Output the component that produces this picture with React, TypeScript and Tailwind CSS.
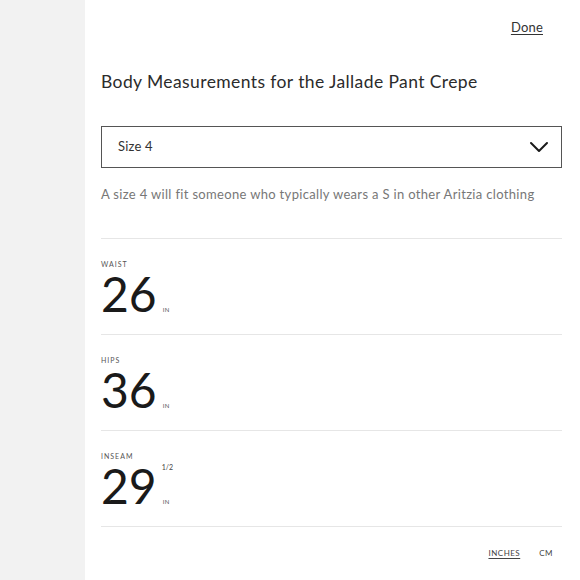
import React, { useState } from 'react';

interface Measurement {
    label: string;
    value: string;
    fraction?: string;
}

const MEASUREMENTS: Measurement[] = [
    { label: 'WAIST', value: '26' },
    { label: 'HIPS', value: '36' },
    { label: 'INSEAM', value: '29', fraction: '1/2' },
];

const ChevronDown = () => (
    <svg width="20" height="12" viewBox="0 0 20 12" fill="none">
        <path d="M2 2l8 8 8-8" stroke="#1a1a1a" strokeWidth="2" strokeLinecap="round" strokeLinejoin="round" />
    </svg>
);

const App: React.FC = () => {
    const [unit, setUnit] = useState<'in' | 'cm'>('in');

    return (
        <div className="flex w-[580px] h-[580px] overflow-hidden bg-[#f2f2f2] font-['Lato','Liberation_Sans',sans-serif] text-[#1a1a1a]">
            {/* lề trái xám */}
            <div className="w-[85px] shrink-0" />

            <div className="flex-1 bg-white pl-[16px] pr-[18px]">
                <div className="flex justify-end pt-[18px] pr-[19px]">
                    <button className="text-[13px] text-[#333] underline underline-offset-2 tracking-[0.2px]">Done</button>
                </div>

                <h2 className="mt-[33px] text-[17.5px] leading-[22px] text-[#2b2b2b] tracking-[0.4px]">
                    Body Measurements for the Jallade Pant Crepe
                </h2>

                <div className="mt-[33px] h-[42px] border-[1.5px] border-[#555] flex items-center justify-between pl-[16px] pr-[12px]">
                    <span className="text-[13px] text-[#333] tracking-[0.2px]">Size 4</span>
                    <ChevronDown />
                </div>

                <p className="mt-[17px] text-[13px] text-[#777] tracking-[0.33px]">
                    A size 4 will fit someone who typically wears a S in other Aritzia clothing
                </p>

                <div className="mt-[34px] border-t border-[#e6e6e6]">
                    {MEASUREMENTS.map((m) => (
                        <div key={m.label} className="h-[96px] border-b border-[#e6e6e6] pt-[21px]">
                            <div className="text-[7px] leading-[8px] tracking-[1px] text-[#555]">{m.label}</div>
                            <div className="flex items-start mt-[6px]">
                                <span className="text-[48px] leading-[40px] font-normal text-[#1a1a1a]">{m.value}</span>
                                <div className="flex flex-col justify-between h-[43px] -mt-[3px] ml-[5px]">
                                    <span className="text-[7px] leading-[8px] text-[#444]">{m.fraction ?? ''}</span>
                                    <span className="text-[6px] leading-[8px] tracking-[0.5px] text-[#555] ml-[1px]">IN</span>
                                </div>
                            </div>
                        </div>
                    ))}
                </div>

                <div className="flex justify-end gap-[19px] mt-[20px] pr-[9px]">
                    <button
                        onClick={() => setUnit('in')}
                        className={`text-[8px] tracking-[0.5px] text-[#444] ${unit === 'in' ? 'underline underline-offset-2' : ''}`}
                    >
                        INCHES
                    </button>
                    <button
                        onClick={() => setUnit('cm')}
                        className={`text-[8px] tracking-[0.5px] text-[#444] ${unit === 'cm' ? 'underline underline-offset-2' : ''}`}
                    >
                        CM
                    </button>
                </div>
            </div>
        </div>
    );
};

export default App;
